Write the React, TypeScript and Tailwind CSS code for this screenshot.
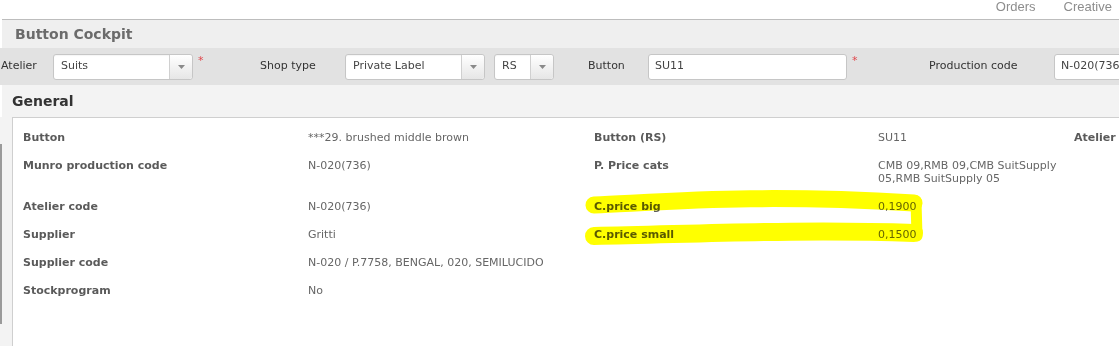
import React from 'react';

const font = { fontFamily: '"DejaVu Sans", Verdana, sans-serif' };

function Select({ value, width }: { value: string; width: string }) {
  return (
    <div className={`${width} h-[26px] shrink-0 flex border border-[#c6c6c6] rounded-[3px] bg-white shadow-[inset_0_1px_1px_rgba(0,0,0,0.04)]`}>
      <div className="flex-1 flex items-center pl-[7px] text-[11px] text-[#444] truncate">{value}</div>
      <div className="w-[23px] flex items-center justify-center border-l border-[#d0d0d0] rounded-r-[3px] bg-gradient-to-b from-white to-[#e6e6e6]">
        <svg width="7" height="4" viewBox="0 0 7 4">
          <path d="M0 0 L7 0 L3.5 4 Z" fill="#8a8a8a" />
        </svg>
      </div>
    </div>
  );
}

function Input({ value, width }: { value: string; width: string }) {
  return (
    <div className={`${width} h-[26px] flex items-center pl-[6px] border border-[#c6c6c6] rounded-[3px] bg-white text-[11px] text-[#444] whitespace-nowrap overflow-hidden shrink-0`}>
      {value}
    </div>
  );
}

function Required() {
  return <span className="text-[#e0474c] text-[11px] leading-none self-start mt-[7px] ml-[5px]">*</span>;
}

const rows: [string, React.ReactNode, string, React.ReactNode, string][] = [
  ['Button', '***29. brushed middle brown', 'Button (RS)', 'SU11', 'Atelier'],
  ['Munro production code', 'N-020(736)', 'P. Price cats', <>CMB 09,RMB 09,CMB SuitSupply<br />05,RMB SuitSupply 05</>, ''],
  ['Atelier code', 'N-020(736)', 'C.price big', '0,1900', ''],
  ['Supplier', 'Gritti', 'C.price small', '0,1500', ''],
  ['Supplier code', 'N-020 / P.7758, BENGAL, 020, SEMILUCIDO', '', '', ''],
  ['Stockprogram', 'No', '', '', ''],
];

export default function App() {
  return (
    <div className="w-[1119px] h-[346px] overflow-hidden bg-white relative" style={font}>
      {/* top nav, cut off at the top */}
      <div className="h-[19px] flex justify-end gap-[28px] pr-[7px] overflow-hidden">
        <span className="-mt-[3px] text-[13px] text-[#8d8d8d]" style={{ fontFamily: '"Liberation Sans", Arial, sans-serif' }}>Orders</span>
        <span className="-mt-[3px] text-[13px] text-[#8d8d8d]" style={{ fontFamily: '"Liberation Sans", Arial, sans-serif' }}>Creative</span>
      </div>

      <div className="border-t border-[#bdbdbd] ml-[2px]">
        <div className="h-[28px] bg-[#efefef] flex items-center pl-[13px] text-[14px] font-bold text-[#6b6b6b]">
          Button Cockpit
        </div>

        {/* filter bar */}
        <div className="h-[37px] bg-[#e2e2e2] flex items-center text-[11px] text-[#333] -ml-[2px] overflow-hidden">
          <div className="w-[53px] shrink-0 pl-[1px]">Atelier</div>
          <Select value="Suits" width="w-[140px]" />
          <div className="w-[67px] shrink-0 self-stretch flex"><Required /></div>
          <div className="w-[85px] shrink-0">Shop type</div>
          <Select value="Private Label" width="w-[140px]" />
          <div className="w-[9px] shrink-0" />
          <Select value="RS" width="w-[60px]" />
          <div className="w-[34px] shrink-0" />
          <div className="w-[60px] shrink-0">Button</div>
          <Input value="SU11" width="w-[199px]" />
          <div className="w-[82px] shrink-0 self-stretch flex"><Required /></div>
          <div className="w-[125px] shrink-0 whitespace-nowrap">Production code</div>
          <Input value="N-020(736)" width="w-[100px]" />
        </div>

        <div className="h-[32px] bg-[#f3f3f3] flex items-center pl-[10px] text-[14px] font-bold text-[#333]">
          General
        </div>
      </div>

      {/* general panel */}
      <div className="flex bg-[#f3f3f3] h-[300px]">
        <div className="w-[12px] shrink-0 flex">
          <div className="w-[2px] h-[180px] mt-[27px] bg-[#9a9a9a]" />
        </div>
        <div className="flex-1 min-w-0 overflow-hidden bg-white border-l border-t border-[#cfcfcf] pt-[13px] pl-[10px]">
          <div className="grid grid-cols-[285px_286px_284px_196px_200px] gap-y-[15px] text-[11px] leading-[13px] whitespace-nowrap">
            {rows.map((r, i) => (
              <React.Fragment key={i}>
                <div className="font-bold text-[#5a5a5a]">{r[0]}</div>
                <div className="text-[#666]">{r[1]}</div>
                <div className="font-bold text-[#5a5a5a]">{r[2]}</div>
                <div className="text-[#666]">{r[3]}</div>
                <div className="font-bold text-[#5a5a5a]">{r[4]}</div>
              </React.Fragment>
            ))}
          </div>
        </div>
      </div>

      {/* highlighter marks */}
      <svg className="absolute left-0 top-0 pointer-events-none mix-blend-multiply" width="1119" height="346">
        <g fill="none" stroke="#ffff00" strokeLinecap="round" strokeLinejoin="round">
          <path d="M594 205 C 680 201, 760 194, 914 203" strokeWidth="17" />
          <path d="M594 236 C 700 234, 800 229, 914 233" strokeWidth="18" />
          <path d="M916 201 L 917 236" strokeWidth="11" />
        </g>
      </svg>
    </div>
  );
}
